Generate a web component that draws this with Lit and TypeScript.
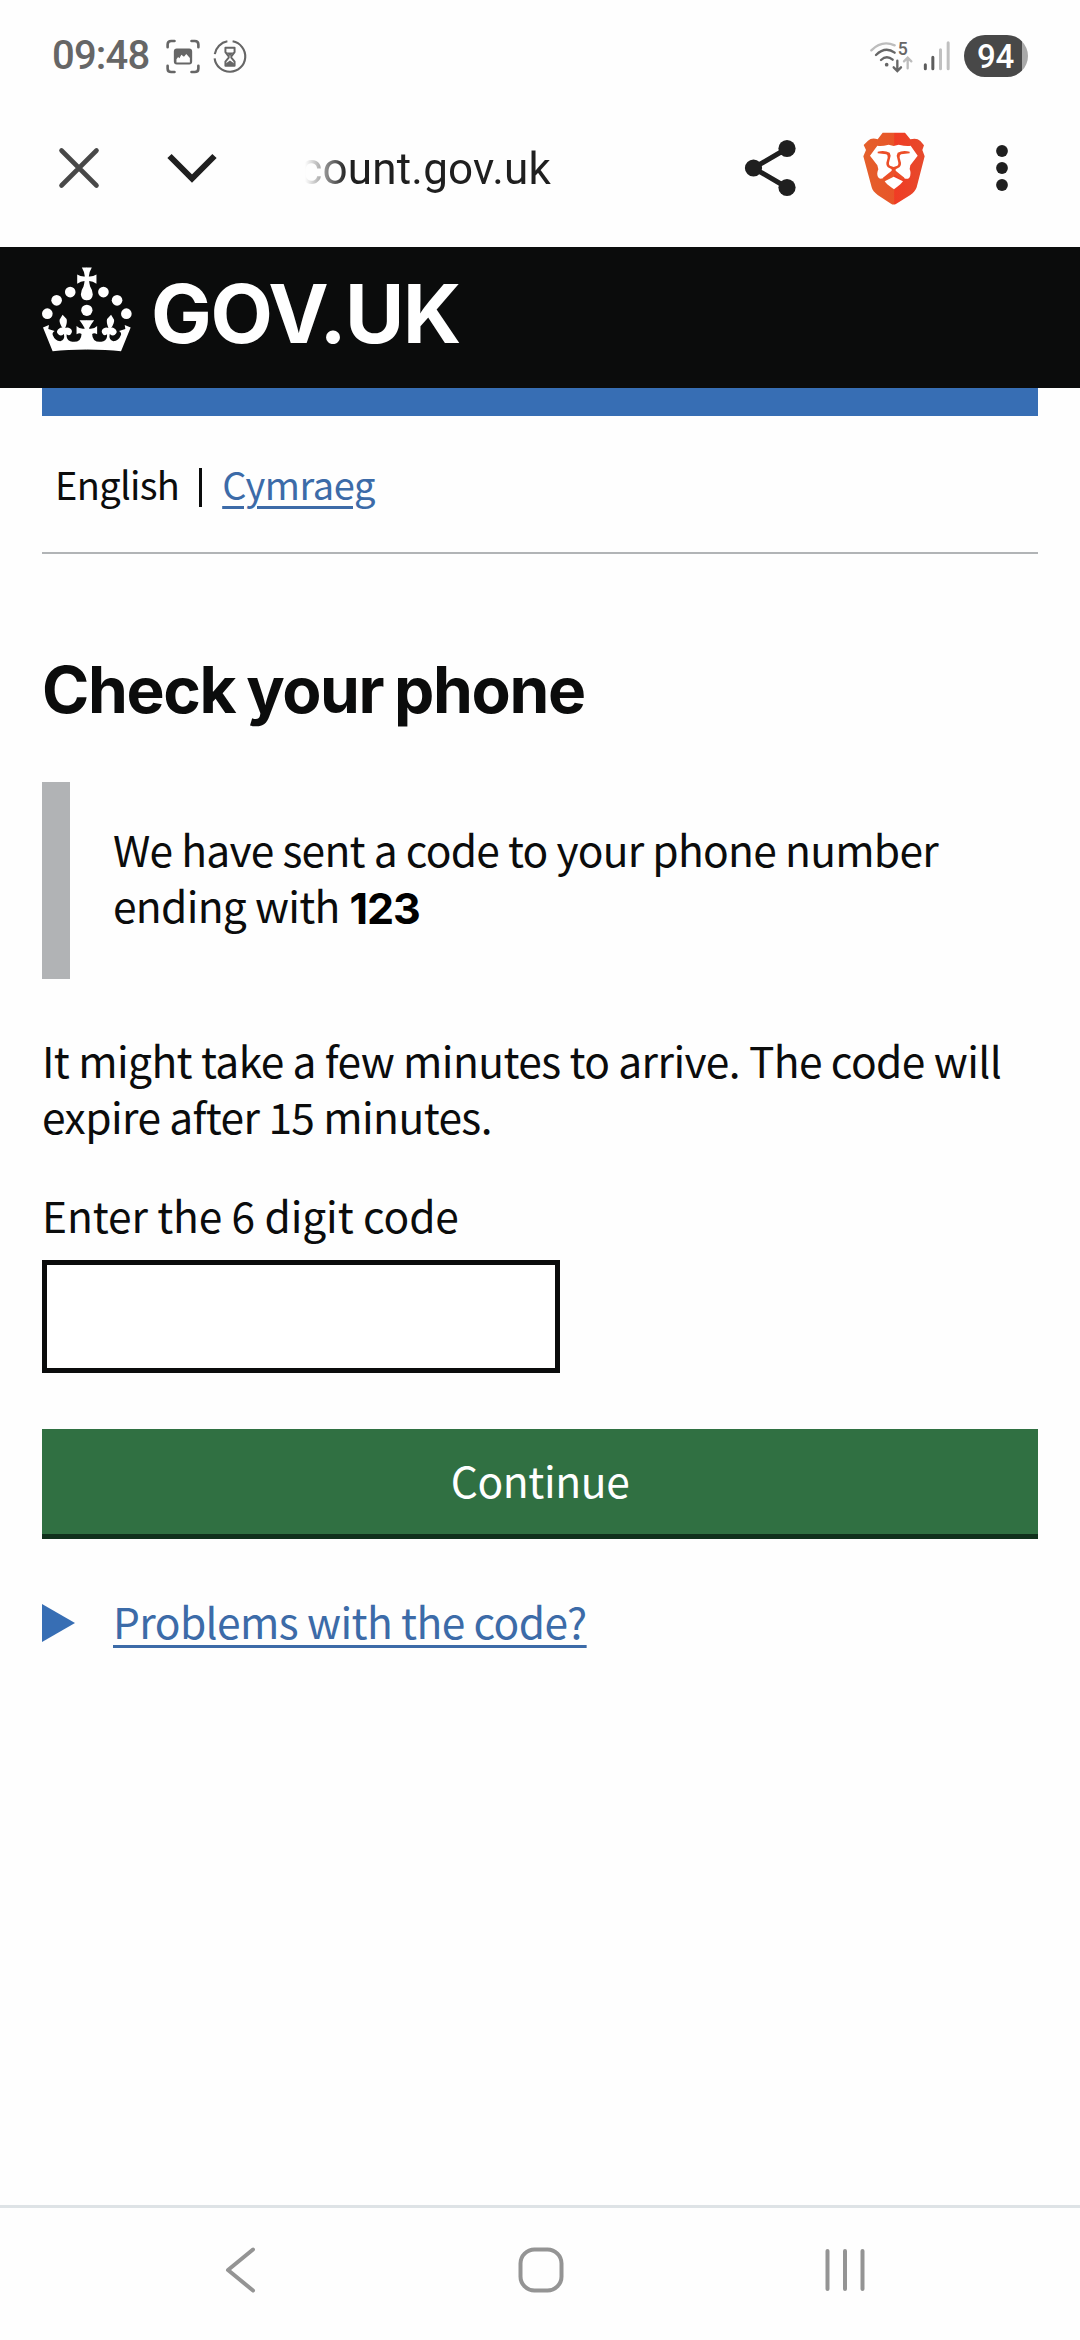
import { LitElement, html, css, svg } from "lit";
import { customElement } from "lit/decorators.js";

const crownHalf = svg`
  <path d="M38 262 L56 254 L54 266 L73 272 Q64 277 68 286 Q74 302 90 303 Q105 298 101 281 Q90 291 82 280 Q76 272 88 264
    Q94 260 97 264 Q86 246 88 238 L97 223 L109 236 Q112 246 105 263 Q112 260 120 265 Q130 273 121 283 Q116 288 109 282
    Q108 298 120 303 Q138 308 148 299 Q154 292 154 281 Q148 276 139 282 L139 257 Q150 268 164 265 Q156 250 148 240
    L170.5 240 L170.5 328 Q110 329 67 333 Z"/>
  <path d="M155 81 H170.5 V180 Q154 180 152 162 Q152 150 160 138 Q163 128 163 122 Q152 122 141 130 V102 Q152 109 164 108 Q162 92 155 81 Z"/>
  <circle cx="120" cy="155" r="16"/>
  <circle cx="79" cy="180" r="16"/>
  <circle cx="51" cy="220" r="16"/>`;

@customElement("phone-status")
class PhoneStatus extends LitElement {
  static styles = css`
    :host { display: flex; align-items: flex-start; height: 95px; font-family: Roboto, sans-serif; font-weight: 500; }
    svg { display: block; flex: none; }
    .time { margin-left: 52px; width: 113px; font-size: 40px; line-height: 47px; padding-top: 32px; letter-spacing: -0.8px; color: #666; }
    .shot { margin: 38px 11px 0 0; }
    .glass { margin-top: 38px; }
    .wifi { margin: 40px 10px 0 auto; }
    .bars { margin: 40px 13px 0 0; }
    .battery { box-sizing: border-box; width: 64px; height: 42px; margin: 35px 52px 0 0; border-radius: 21px; color: #fff;
      background: linear-gradient(90deg, #484848 58px, #a9a9a9 58px); font-size: 33px; line-height: 43px; padding-left: 13px; letter-spacing: -0.3px; }
  `;
  render() {
    return html`
      <div class="time">09:48</div>
      <svg class="shot" width="36" height="37" viewBox="405 53 110 111" fill="none" stroke="#666" stroke-width="8" stroke-linecap="round">
        <path d="M413 80V72Q413 61 424 61H434M486 61H496Q507 61 507 72V80M507 137V145Q507 156 496 156H486M434 156H424Q413 156 413 145V137"/>
        <path stroke="none" fill="#666" fill-rule="evenodd" d="M441 84H479Q488 84 488 93V124Q488 133 479 133H441Q432 133 432 124V93Q432 84 441 84ZM440 127H481V113L470 101L463 109L455 103L449 114L445 110L440 117Z"/>
      </svg>
      <svg class="glass" width="36" height="37" viewBox="547 53 110 111" fill="none" stroke="#666" stroke-width="6.500">
        <path d="M610 62A47 47 0 1 1 555 114M555.500 101A47 47 0 0 1 594 62"/>
        <path stroke-width="6" stroke-linejoin="round" d="M588 82H616V95L606 108V112L616 124V137H588V124L598 112V108L588 95Z"/>
        <path fill="#666" stroke="none" d="M591 96H613L602 108ZM590 137V129L602 121L614 129V137Z"/>
      </svg>
      <svg class="wifi" width="43" height="34" viewBox="62 60 129 102" fill="none" stroke-width="7" stroke-linecap="round">
        <path stroke="#bdbdbd" d="M66 91Q98 59 136 76"/>
        <path stroke="#666" d="M80 105Q108 78 136 98M95 120Q112 104 130 119"/>
        <circle cx="112" cy="134" r="5.500" fill="#666"/>
        <path stroke="#666" d="M144 122V152M133 142L144 153L155 142"/>
        <path stroke="#bdbdbd" d="M175 145V114M164 124L175 113L186 124"/>
        <text x="145" y="105" font-size="53" fill="#666">5</text>
      </svg>
      <svg class="bars" width="28" height="32" viewBox="218 60 84 96" fill="none" stroke-width="9" stroke-linecap="round">
        <path stroke="#5c5c5c" d="M225 134V146M247.500 112V146"/>
        <path stroke="#c0c0c0" d="M270.500 89V146M293.500 68V146"/>
      </svg>
      <div class="battery">94</div>`;
  }
}

@customElement("browser-bar")
class BrowserBar extends LitElement {
  static styles = css`
    :host { display: flex; align-items: center; height: 152px; box-sizing: border-box; }
    svg { display: block; flex: none; }
    .close { margin: -6px 0 0 58px; }
    .down { margin: -6px 0 0 65px; }
    .host { width: 246px; margin: -4px 0 0 86px; display: flex; justify-content: flex-end; overflow: hidden; white-space: nowrap;
      font: 44px/60px Roboto, sans-serif; color: #1f1f1f; letter-spacing: 0.2px;
      -webkit-mask-image: linear-gradient(90deg, transparent 0, #000 42px); mask-image: linear-gradient(90deg, transparent 0, #000 42px); }
    .share { margin: -6px 0 0 auto; }
    .lion { margin: -5px 71px 0 67px; }
    .dots { margin: -6px 72px 0 0; }
  `;
  render() {
    return html`
      <svg class="close" width="42" height="42" viewBox="0 0 42 42" stroke="#484848" stroke-width="4.600" stroke-linecap="round"><path d="M3.500 3.500L38.500 38.500M38.500 3.500L3.500 38.500"/></svg>
      <svg class="down" width="54" height="34" viewBox="0 0 54 34" fill="none" stroke="#1f1f1f" stroke-width="6"><path d="M4.500 5L27 27.500L49.500 5"/></svg>
      <div class="host"><span>count.gov.uk</span></div>
      <svg class="share" width="52" height="58" viewBox="0 0 52 58" fill="#1f1f1f" stroke="#1f1f1f" stroke-width="5">
        <path fill="none" d="M43 9.500L9.500 29L43 48.500"/>
        <g stroke="none"><circle cx="9.500" cy="29" r="8.600"/><circle cx="43" cy="9.500" r="8.600"/><circle cx="43" cy="48.500" r="8.600"/></g>
      </svg>
      <svg class="lion" width="62" height="73" viewBox="431 65 186 219">
        <defs><linearGradient id="g"><stop offset="0" stop-color="#e4602b"/><stop offset=".5" stop-color="#e85528"/><stop offset=".51" stop-color="#f03c24"/><stop offset="1" stop-color="#e64a2c"/></linearGradient></defs>
        <path fill="url(#g)" d="M490 67H557L573 87Q592 81 603 92L614 105L609 119L616 138L592 231Q588 244 573 254L531 280Q523 285 515 280L475 254Q460 243 457 231L432 138L440 119L433 104L446 91Q457 81 475 87Z"/>
        <path fill="#fff" d="M474 106Q485 109 508 103L523 107L538 103Q563 109 574 106L595 136L573 165L571 176Q577 190 570 202Q564 208 555 204L523 184L491 204Q480 208 476 200Q471 190 477 177L474 165L452 136Z"/>
        <path fill="#ec4e28" d="M475 124Q496 119 511 127L514 136L510 153Q507 163 512 166L523 170L534 166Q539 163 536 153L532 136L535 127Q550 119 571 124V129L545 132Q540 135 541 142L545 157Q546 168 536 173L529 177V181L555 202L549 209L523 191L497 209L491 202L517 181V177L510 173Q500 168 501 157L505 142Q506 135 501 132L475 129Z"/>
        <path fill="#fff" d="M496 213L523 199L551 213Q547 220 524 237Q499 220 496 213Z"/>
      </svg>
      <svg class="dots" width="12" height="46" viewBox="0 0 12 46" fill="#1f1f1f"><circle cx="6" cy="6" r="5.900"/><circle cx="6" cy="23" r="5.900"/><circle cx="6" cy="40" r="5.900"/></svg>`;
  }
}

@customElement("gov-header")
class GovHeader extends LitElement {
  static styles = css`
    :host { display: flex; align-items: flex-start; height: 141px; background: #0b0c0c; padding: 0 42px; box-sizing: border-box; color: #fff; }
    .crown { display: block; flex: none; margin-top: 19.500px; }
    .name { font: 700 81px/90px Inter, sans-serif; letter-spacing: -1.400px; margin: 22px 0 0 19px; }
  `;
  render() {
    return html`
      <svg class="crown" width="90" height="85" viewBox="35 80 271 255" fill="#fff">
        ${crownHalf}
        <g transform="translate(340 0) scale(-1 1)">${crownHalf}</g>
        <circle cx="170" cy="210" r="17"/>
      </svg>
      <div class="name">GOV.UK</div>`;
  }
}

@customElement("phone-nav")
class PhoneNav extends LitElement {
  static styles = css`
    :host { display: flex; justify-content: space-between; box-sizing: border-box; height: 135px; border-top: 3px solid #dee3e6; padding: 39px 215px 0 225px; }
    svg { display: block; }
  `;
  render() {
    return html`
      <svg width="31" height="46" viewBox="0 0 31 46" fill="none" stroke="#949494" stroke-width="4" stroke-linecap="round" stroke-linejoin="round"><path d="M28 2.500L3 23L28 43.500"/></svg>
      <svg width="46" height="46" viewBox="0 0 46 46" fill="none" stroke="#949494" stroke-width="4"><rect x="2.500" y="2.500" width="41" height="41" rx="14"/></svg>
      <svg width="40" height="46" viewBox="0 0 40 46" stroke="#949494" stroke-width="4" stroke-linecap="round"><path d="M2.500 4V42M20 4V42M37.500 4V42"/></svg>`;
  }
}

@customElement("app-root")
class AppRoot extends LitElement {
  static styles = css`
    :host { display: flex; flex-direction: column; height: 2340px; background: #fefefe; color: #0b0c0c;
      font: 42.500px/56px "Noto Sans CJK JP", "Noto Sans", sans-serif; letter-spacing: -0.6px; }
    main { flex: 1; margin: 0 42px; display: flex; flex-direction: column; }
    .strip { height: 28px; background: #376eb4; }
    .langs { box-sizing: border-box; height: 138px; padding: 44px 0 0 13px; border-bottom: 2px solid #b1b4b6; display: flex;
      font-size: 38px; line-height: 48px; letter-spacing: -0.7px; }
    .split { width: 3px; height: 39px; margin: 8px 20px 0; background: #0b0c0c; }
    a { color: #3c6ba8; text-decoration: underline; text-decoration-thickness: 3px; text-underline-offset: 6px; }
    .langs a { letter-spacing: -0.45px; }
    h1 { font: 700 64px/70px Inter, sans-serif; letter-spacing: -1.350px; word-spacing: -3px; margin: 101px 0 57px; }
    .inset { box-sizing: border-box; height: 197px; border-left: 28px solid #b1b3b5; padding: 39px 0 0 43px; letter-spacing: -0.72px; white-space: nowrap; }
    b { font: 700 43px/0 Inter, sans-serif; letter-spacing: -1px; margin-left: 1px; color: #000; position: relative; top: 1px; }
    p { margin: 53px 0 43px; white-space: nowrap; }
    label { letter-spacing: -0.12px; }
    input { box-sizing: border-box; width: 518px; height: 113px; margin: 17px 0 56px; border: 5px solid #0b0c0c; border-radius: 0; background: #fff; padding: 0 12px; font: inherit; }
    button { height: 110px; border: 0; border-bottom: 5px solid #10301c; border-radius: 0; background: #307042; color: #fff; font: inherit; letter-spacing: -0.4px; line-height: 100px; padding: 0 0 4px; }
    .help { display: flex; margin-top: 54px; }
    .tri { display: block; margin: 11px 38px 0 0; }
  `;
  render() {
    return html`
      <phone-status></phone-status>
      <browser-bar></browser-bar>
      <gov-header></gov-header>
      <main>
        <div class="strip"></div>
        <div class="langs"><span>English</span><span class="split"></span><a>Cymraeg</a></div>
        <h1>Check your phone</h1>
        <div class="inset">We have sent a code to your phone number<br>ending with <b>123</b></div>
        <p>It might take a few minutes to arrive. The code will<br>expire after 15 minutes.</p>
        <label for="code">Enter the 6 digit code</label>
        <input id="code" type="text" inputmode="numeric">
        <button>Continue</button>
        <div class="help">
          <svg class="tri" width="33" height="38" viewBox="0 0 33 38"><path fill="#376eb4" d="M0 0L33 19L0 38Z"/></svg>
          <a>Problems with the code?</a>
        </div>
      </main>
      <phone-nav></phone-nav>`;
  }
}
